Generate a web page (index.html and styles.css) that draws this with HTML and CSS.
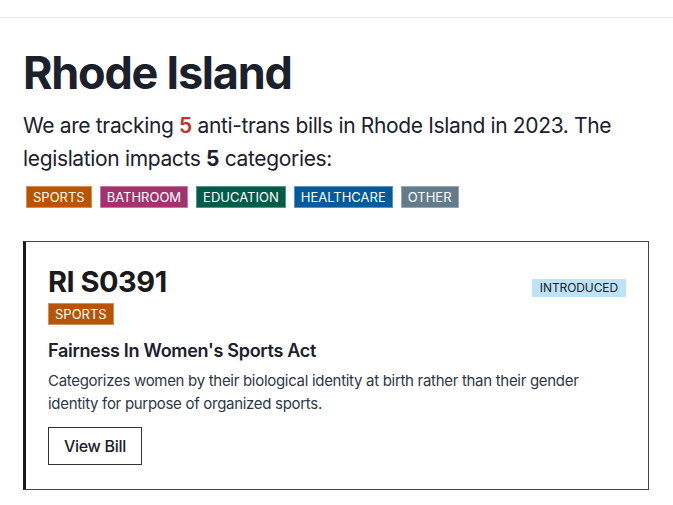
FILE: index.html
```html
<!DOCTYPE html>
<html lang="en">
<head>
<meta charset="utf-8">
<title>Rhode Island</title>
<link rel="stylesheet" href="styles.css">
</head>
<body>
<header class="topbar"></header>
<main class="page">
  <h1 class="state-title">Rhode Island</h1>
  <p class="summary">We are tracking <span class="count-red">5</span> anti-trans bills in Rhode Island in 2023. The legislation impacts <strong>5</strong> categories:</p>
  <div class="tags">
    <span class="tag sports">SPORTS</span>
    <span class="tag bathroom">BATHROOM</span>
    <span class="tag education">EDUCATION</span>
    <span class="tag healthcare">HEALTHCARE</span>
    <span class="tag other">OTHER</span>
  </div>
  <article class="bill-card">
    <div class="bill-head">
      <div class="bill-id-block">
        <h2 class="bill-id">RI S0391</h2>
        <span class="tag sports">SPORTS</span>
      </div>
      <span class="status">INTRODUCED</span>
    </div>
    <h3 class="bill-name">Fairness In Women's Sports Act</h3>
    <p class="bill-desc">Categorizes women by their biological identity at birth rather than their gender identity for purpose of organized sports.</p>
    <a class="view-btn" href="#">View Bill</a>
  </article>
</main>
</body>
</html>
```
FILE: styles.css
```css
* { box-sizing: border-box; }
body {
  margin: 0;
  font-family: Inter, "Noto Sans", sans-serif;
  color: #1a202c;
  background: #fff;
}
.topbar {
  height: 18px;
  border-bottom: 1px solid #e6e8f0;
}
.page {
  padding: 0 24px 0 23px;
}
.state-title {
  margin: 27px 0 0;
  font-size: 45px;
  line-height: 56px;
  font-weight: 700;
  letter-spacing: -1.25px;
}
.summary {
  margin: 8px 0 0;
  font-size: 21px;
  line-height: 33px;
  font-weight: 400;
  letter-spacing: -0.35px;
}
.count-red { color: #c53030; font-weight: 600; }
.summary strong { font-weight: 700; }
.tags {
  display: flex;
  gap: 8px;
  margin: 11px 0 0 3px;
}
.tag {
  display: inline-block;
  color: #fff;
  font-size: 13px;
  line-height: 20px;
  padding: 0 6px;
  letter-spacing: 0;
  border: 1px solid rgba(255,255,255,0.35);
}
.tag.sports { background: #b95400; }
.tag.bathroom { background: #a3336f; }
.tag.education { background: #005c48; }
.tag.healthcare { background: #005a9c; }
.tag.other { background: #627c8b; }
.bill-card {
  margin-top: 33px;
  border: 1px solid #444;
  border-left: 3px solid #1a1a1a;
  padding: 22px 22px 24px 22px;
  width: 626px;
}
.bill-head {
  display: flex;
  justify-content: space-between;
  align-items: flex-start;
}
.bill-id-block {
  display: flex;
  flex-direction: column;
  align-items: flex-start;
  gap: 3px;
}
.bill-id {
  margin: 0;
  font-size: 29px;
  line-height: 36px;
  font-weight: 700;
  letter-spacing: -0.5px;
  color: #1a1a1a;
}
.status {
  margin-top: 15px;
  background: #bee3f8;
  color: #1a202c;
  font-size: 12px;
  line-height: 18px;
  padding: 0 8px;
  letter-spacing: -0.1px;
}
.bill-name {
  margin: 14px 0 0;
  font-size: 18px;
  line-height: 24px;
  font-weight: 600;
  letter-spacing: -0.3px;
}
.bill-desc {
  margin: 6px 0 0;
  font-size: 15px;
  line-height: 23px;
  color: #2d3748;
  letter-spacing: -0.3px;
}
.view-btn {
  display: inline-block;
  margin-top: 12px;
  border: 1px solid #333;
  padding: 0 15px;
  height: 38px;
  line-height: 36px;
  font-size: 16px;
  font-weight: 500;
  letter-spacing: -0.3px;
  color: #1a202c;
  text-decoration: none;
}
```
